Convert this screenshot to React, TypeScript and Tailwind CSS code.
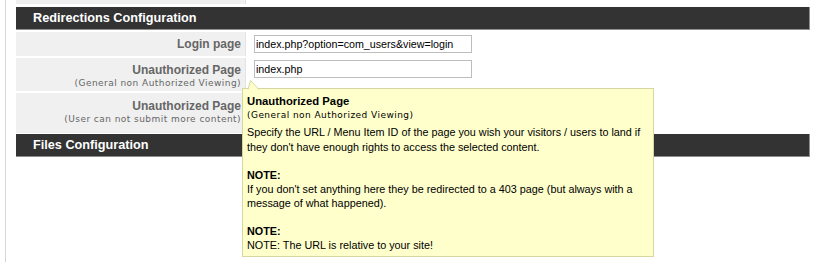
export default function App() {
  const sans = { fontFamily: '"Liberation Sans", Arial, sans-serif' };
  const small = { fontFamily: '"DejaVu Sans", Verdana, sans-serif' };
  return (
    <div className="relative w-[816px] h-[262px] overflow-hidden bg-white" style={sans}>
      <div className="ml-[5px] h-[262px] border-l border-[#d6d6d6] pl-[10px] pr-[6px]">
        <div className="flex h-[4px]">
          <div className="w-[230px] bg-[#f0f0f0] border-r border-[#e0e0e0]" />
        </div>
        <div className="mt-[3px] h-[23px] bg-[#333333] border-b border-r border-[#8e8e8e] pl-[17px] text-[12.7px] font-bold leading-[22px] text-white">
          Redirections Configuration
        </div>
        <div className="mt-[2px] flex h-[24px]">
          <div className="w-[230px] shrink-0 bg-[#f0f0f0] border-r border-[#e4e4e4] pr-[4px] text-right text-[12px] font-bold leading-[24px] text-[#666666]">
            Login page
          </div>
          <div className="flex-1 pl-[8px] pt-[3px]">
            <div className="h-[18px] w-[218px] border border-[#bdbdbd] bg-white pl-[1px] text-[10.7px] leading-[16px] text-black">
              index.php?option=com_users&amp;view=login
            </div>
          </div>
        </div>
        <div className="mt-[2px] flex h-[33px]">
          <div className="w-[230px] shrink-0 bg-[#f0f0f0] border-r border-[#e4e4e4] pr-[4px] pt-[5px] text-right text-[#666666]">
            <div className="text-[12px] font-bold leading-[14px]">Unauthorized Page</div>
            <div className="text-[9px] leading-[12px] tracking-[0.45px]" style={small}>(General non Authorized Viewing)</div>
          </div>
          <div className="flex-1 pl-[8px] pt-[2px]">
            <div className="h-[18px] w-[218px] border border-[#bdbdbd] bg-white pl-[1px] text-[10.7px] leading-[16px] text-black">
              index.php
            </div>
          </div>
        </div>
        <div className="mt-[2px] flex h-[40px]">
          <div className="w-[230px] shrink-0 bg-[#f0f0f0] border-r border-[#e4e4e4] pr-[4px] pt-[6px] text-right text-[#666666]">
            <div className="text-[12px] font-bold leading-[14px]">Unauthorized Page</div>
            <div className="text-[9px] leading-[12px] tracking-[0.45px]" style={small}>(User can not submit more content)</div>
          </div>
          <div className="flex-1" />
        </div>
        <div className="mt-[1px] h-[23px] bg-[#333333] border-b border-r border-[#8e8e8e] pl-[17px] text-[12.7px] font-bold leading-[22px] text-white">
          Files Configuration
        </div>
      </div>

      {/* tooltip */}
      <div className="absolute left-[242px] top-[88px] w-[412px] h-[169px] border border-[#d6d6a0] bg-[#ffffcc] px-[4px] pt-[5px] text-[10.8px] text-black">
        <svg className="absolute left-[4px] top-[-9px]" width="14" height="10" viewBox="0 0 14 10">
          <path d="M1 10 L3.5 0.5 L12 10 Z" fill="#ffffcc" />
          <path d="M1 9.5 L3.5 0.5 L12 9.5" fill="none" stroke="#d6d6a0" strokeWidth="1" />
        </svg>
        <div className="font-bold text-[11.3px] leading-[14px]">Unauthorized Page</div>
        <div className="text-[9px] leading-[14px] tracking-[0.45px]" style={small}>(General non Authorized Viewing)</div>
        <div className="mt-[3px] leading-[15px]">
          Specify the URL / Menu Item ID of the page you wish your visitors / users to land if
          <br />
          they don't have enough rights to access the selected content.
        </div>
        <div className="mt-[13px] leading-[14px]">
          <div className="font-bold">NOTE:</div>
          <div>If you don't set anything here they be redirected to a 403 page (but always with a</div>
          <div>message of what happened).</div>
        </div>
        <div className="mt-[14px] leading-[14px]">
          <div className="font-bold">NOTE:</div>
          <div>NOTE: The URL is relative to your site!</div>
        </div>
      </div>
    </div>
  );
}
